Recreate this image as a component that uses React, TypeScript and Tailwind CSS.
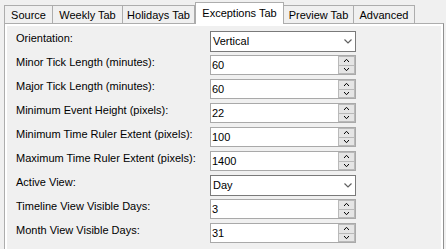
import React from "react";

type Row = { label: string; kind: "combo" | "num"; value: string };

const rows: Row[] = [
  { label: "Orientation:", kind: "combo", value: "Vertical" },
  { label: "Minor Tick Length (minutes):", kind: "num", value: "60" },
  { label: "Major Tick Length (minutes):", kind: "num", value: "60" },
  { label: "Minimum Event Height (pixels):", kind: "num", value: "22" },
  { label: "Minimum Time Ruler Extent (pixels):", kind: "num", value: "100" },
  { label: "Maximum Time Ruler Extent (pixels):", kind: "num", value: "1400" },
  { label: "Active View:", kind: "combo", value: "Day" },
  { label: "Timeline View Visible Days:", kind: "num", value: "3" },
  { label: "Month View Visible Days:", kind: "num", value: "31" },
];

const tabs = [
  { name: "Source", w: "w-[49px]" },
  { name: "Weekly Tab", w: "w-[71px]" },
  { name: "Holidays Tab", w: "w-[73px]" },
  { name: "Exceptions Tab", w: "w-[89px]", active: true },
  { name: "Preview Tab", w: "w-[71px]" },
  { name: "Advanced", w: "w-[62px]" },
];

function Combo({ value }: { value: string }) {
  return (
    <div className="flex items-center h-[21px] w-[146px] border border-[#7a7a7a] bg-white">
      <span className="flex-1 pl-[2px] leading-[13px]">{value}</span>
      <svg width="8" height="5" viewBox="0 0 8 5" className="mr-[3px]">
        <path d="M0.5 0.5 L4 4 L7.5 0.5" fill="none" stroke="#606060" strokeWidth="1.2" />
      </svg>
    </div>
  );
}

function Spin({ value }: { value: string }) {
  return (
    <div className="flex h-[20px] w-[146px] border border-[#a9a9a9] bg-white">
      <span className="flex-1 pl-[1px] pt-[1px] leading-[16px]">{value}</span>
      <div className="flex flex-col w-[17px] bg-[#b9b9b9] p-px gap-px">
        <div className="flex-1 bg-[#e5e5e5] flex items-center justify-center">
          <svg width="5" height="3" viewBox="0 0 5 3">
            <path d="M0 3 L2.5 0.3 L5 3" fill="none" stroke="#000" strokeWidth="1" />
          </svg>
        </div>
        <div className="flex-1 bg-[#e5e5e5] flex items-center justify-center">
          <svg width="5" height="3" viewBox="0 0 5 3">
            <path d="M0 0 L2.5 2.7 L5 0" fill="none" stroke="#000" strokeWidth="1" />
          </svg>
        </div>
      </div>
    </div>
  );
}

export default function App() {
  return (
    <div className="w-[446px] h-[249px] overflow-hidden bg-[#f0f0f0] text-black text-[11px] font-['Liberation_Sans',Arial,sans-serif]">
      {/* tab strip */}
      <div className="flex items-end h-[23px] pl-[4px]">
        {tabs.map((t, i) =>
          t.active ? (
            <div
              key={t.name}
              className={`${t.w} relative z-10 h-[22px] -mb-px border border-b-0 border-[#adadad] bg-white text-center pt-[4px] leading-[13px]`}
            >
              {t.name}
            </div>
          ) : (
            <div
              key={t.name}
              className={`${t.w} ${i > 0 && !tabs[i - 1].active ? "-ml-px" : ""} ${i > 0 && tabs[i - 1].active ? "-ml-px" : ""} h-[18px] border border-b-0 border-[#adadad] bg-[#f0f0f0] text-center pt-[3px] leading-[13px]`}
            >
              {t.name}
            </div>
          )
        )}
      </div>

      {/* panel */}
      <div className="ml-[4px] w-[440px] h-[240px] border border-[#adadad] border-r-[#8f8f8f] bg-white p-[2px]">
        <div className="h-full bg-[#f0f0f0] pt-[5px] pl-[9px]">
          {rows.map((r) => (
            <div key={r.label} className="flex h-[24px]">
              <div className="w-[194px] pt-px leading-[13px]">{r.label}</div>
              {r.kind === "combo" ? <Combo value={r.value} /> : <Spin value={r.value} />}
            </div>
          ))}
        </div>
      </div>
    </div>
  );
}
